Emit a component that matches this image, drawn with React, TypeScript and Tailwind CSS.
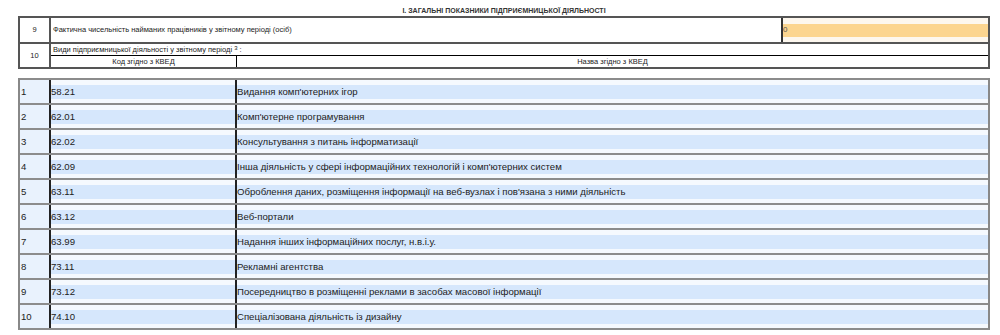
const rows = [
  { n: "1", code: "58.21", name: "Видання комп'ютерних ігор" },
  { n: "2", code: "62.01", name: "Комп'ютерне програмування" },
  { n: "3", code: "62.02", name: "Консультування з питань інформатизації" },
  { n: "4", code: "62.09", name: "Інша діяльність у сфері інформаційних технологій і комп'ютерних систем" },
  { n: "5", code: "63.11", name: "Оброблення даних, розміщення інформації на веб-вузлах і пов'язана з ними діяльність" },
  { n: "6", code: "63.12", name: "Веб-портали" },
  { n: "7", code: "63.99", name: "Надання інших інформаційних послуг, н.в.і.у." },
  { n: "8", code: "73.11", name: "Рекламні агентства" },
  { n: "9", code: "73.12", name: "Посередництво в розміщенні реклами в засобах масової інформації" },
  { n: "10", code: "74.10", name: "Спеціалізована діяльність із дизайну" },
];

function Band({ children }: { children: React.ReactNode }) {
  return (
    <div className="flex h-full items-center bg-[#f5f9fe]">
      <div className="flex h-[14px] w-full items-center bg-[#d6e7fc] leading-none">{children}</div>
    </div>
  );
}

export default function App() {
  return (
    <div className="min-h-[335px] w-[1000px] bg-white font-['Liberation_Sans',Arial,sans-serif] text-[#222]">
      <div className="ml-[18px] w-[972px] pt-[6px] text-center text-[7px] font-bold leading-[10px] text-[#333]">
        І. ЗАГАЛЬНІ ПОКАЗНИКИ ПІДПРИЄМНИЦЬКОЇ ДІЯЛЬНОСТІ
      </div>

      <div className="ml-[18px] w-[972px] border-2 border-[#555] text-[7.5px]">
        <div className="flex h-[26px] border-b-2 border-[#555]">
          <div className="flex w-[31px] items-center justify-center border-r-2 border-[#555]">9</div>
          <div className="flex w-[732px] items-center border-r-2 border-[#333] pl-[2px]">
            Фактична чисельність найманих працівників у звітному періоді (осіб)
          </div>
          <div className="flex flex-1 items-center bg-[#fdf7ee]">
            <div className="flex h-[13px] w-full items-center bg-[#fcd58f] text-[8px] text-[#555]">0</div>
          </div>
        </div>
        <div className="flex h-[23px]">
          <div className="flex w-[31px] items-center justify-center border-r-2 border-[#555]">10</div>
          <div className="flex flex-1 flex-col">
            <div className="flex h-[12px] items-center border-b border-black pl-[2px]">
              Види підприємницької діяльності у звітному періоді&nbsp;
              <sup className="relative -top-[2px] text-[6px]">3</sup>&nbsp;:
            </div>
            <div className="flex flex-1">
              <div className="flex w-[186px] items-center justify-center border-r border-black">
                Код згідно з КВЕД
              </div>
              <div className="flex flex-1 items-center justify-center">Назва згідно з КВЕД</div>
            </div>
          </div>
        </div>
      </div>

      <div className="ml-[18px] mt-[9px] w-[972px] border-x-2 border-b-2 border-x-[#888] border-b-[#8c8c8c] text-[9.6px]">
        {rows.map((r) => (
          <div key={r.n} className="flex h-[25px] border-t-2 border-[#8c8c8c]">
            <div className="flex w-[31px] items-center border-r-2 border-[#222] bg-[#e9f2fd] pl-[1px] leading-none">{r.n}</div>
            <div className="w-[186px] border-r-2 border-[#222]">
              <Band>{r.code}</Band>
            </div>
            <div className="flex-1">
              <Band>{r.name}</Band>
            </div>
          </div>
        ))}
      </div>
    </div>
  );
}
